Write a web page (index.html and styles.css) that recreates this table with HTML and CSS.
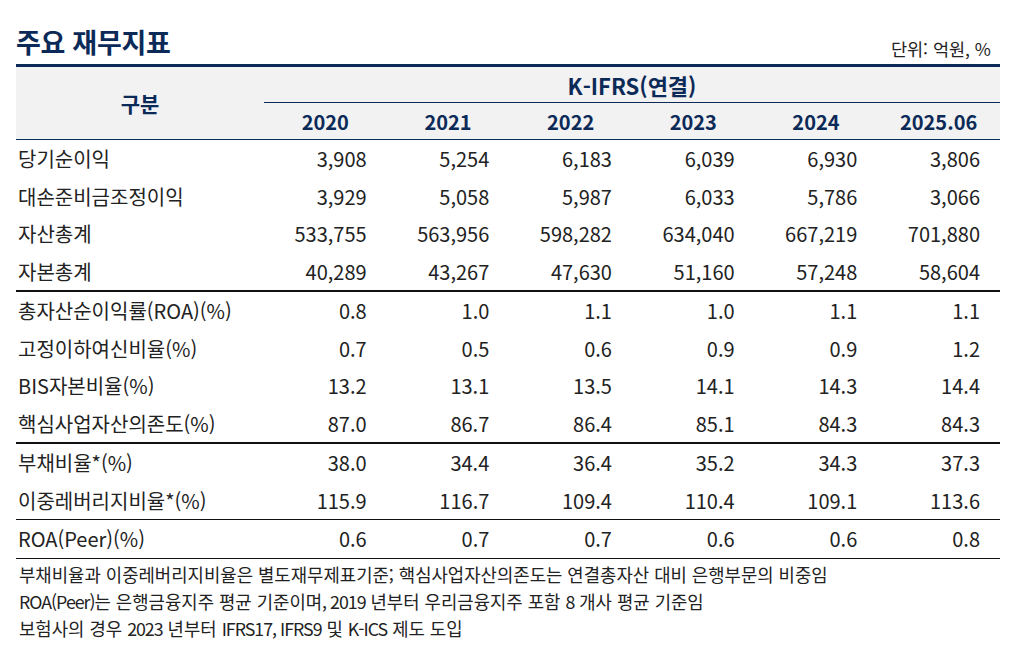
FILE: index.html
```html
<!DOCTYPE html>
<html lang="ko">
<head>
<meta charset="utf-8">
<link rel="stylesheet" href="styles.css">
</head>
<body>
<div class="wrap">
  <div class="titlebar">
    <h1 class="title">주요 재무지표</h1>
    <div class="unit">단위: 억원, %</div>
  </div>
  <table class="fin">
    <colgroup>
      <col class="c-label">
      <col><col><col><col><col><col>
    </colgroup>
    <thead>
      <tr class="h1">
        <th rowspan="2" class="gubun">구분</th>
        <th colspan="6" class="std">K-IFRS(연결)</th>
      </tr>
      <tr class="h2">
        <th>2020</th><th>2021</th><th>2022</th><th>2023</th><th>2024</th><th>2025.06</th>
      </tr>
    </thead>
    <tbody>
      <tr><td>당기순이익</td><td>3,908</td><td>5,254</td><td>6,183</td><td>6,039</td><td>6,930</td><td>3,806</td></tr>
      <tr><td>대손준비금조정이익</td><td>3,929</td><td>5,058</td><td>5,987</td><td>6,033</td><td>5,786</td><td>3,066</td></tr>
      <tr><td>자산총계</td><td>533,755</td><td>563,956</td><td>598,282</td><td>634,040</td><td>667,219</td><td>701,880</td></tr>
      <tr class="sep-thick"><td>자본총계</td><td>40,289</td><td>43,267</td><td>47,630</td><td>51,160</td><td>57,248</td><td>58,604</td></tr>
      <tr><td>총자산순이익률(ROA)(%)</td><td>0.8</td><td>1.0</td><td>1.1</td><td>1.0</td><td>1.1</td><td>1.1</td></tr>
      <tr><td>고정이하여신비율(%)</td><td>0.7</td><td>0.5</td><td>0.6</td><td>0.9</td><td>0.9</td><td>1.2</td></tr>
      <tr><td>BIS자본비율(%)</td><td>13.2</td><td>13.1</td><td>13.5</td><td>14.1</td><td>14.3</td><td>14.4</td></tr>
      <tr class="sep-thick"><td>핵심사업자산의존도(%)</td><td>87.0</td><td>86.7</td><td>86.4</td><td>85.1</td><td>84.3</td><td>84.3</td></tr>
      <tr><td>부채비율*(%)</td><td>38.0</td><td>34.4</td><td>36.4</td><td>35.2</td><td>34.3</td><td>37.3</td></tr>
      <tr class="sep-thin"><td>이중레버리지비율*(%)</td><td>115.9</td><td>116.7</td><td>109.4</td><td>110.4</td><td>109.1</td><td>113.6</td></tr>
      <tr class="sep-thin"><td>ROA(Peer)(%)</td><td>0.6</td><td>0.7</td><td>0.7</td><td>0.6</td><td>0.6</td><td>0.8</td></tr>
    </tbody>
  </table>
  <div class="notes">
    <p>부채비율과 이중레버리지비율은 별도재무제표기준; 핵심사업자산의존도는 연결총자산 대비 은행부문의 비중임</p>
    <p><span class="lat">ROA(Peer)</span>는 은행금융지주 평균 기준이며<span class="lat">, 2019</span> 년부터 우리금융지주 포함 <span class="lat">8</span> 개사 평균 기준임</p>
    <p>보험사의 경우 <span class="lat">2023</span> 년부터 <span class="lat">IFRS17, IFRS9</span> 및 <span class="lat">K-ICS</span> 제도 도입</p>
  </div>
</div>
</body>
</html>
```
FILE: styles.css
```css
html, body {
  margin: 0;
  padding: 0;
  background: #ffffff;
}
body {
  font-family: "Noto Sans CJK KR", "Noto Sans", sans-serif;
  color: #1f1f1f;
}
.wrap {
  width: 984px;
  padding: 0 0 0 16px;
}
.titlebar {
  display: flex;
  justify-content: space-between;
  align-items: flex-end;
  height: 64px;
  box-sizing: border-box;
  padding-bottom: 4px;
}
.title {
  margin: 0 0 2px 0;
  font-size: 27px;
  font-weight: 700;
  color: #0c2a58;
  letter-spacing: -0.3px;
  line-height: 32px;
}
.unit {
  font-size: 17.5px;
  color: #222;
  margin-right: 9px;
  line-height: 22px;
}
.fin {
  width: 984px;
  border-collapse: collapse;
  table-layout: fixed;
  border-top: 3px solid #0c2a58;
}
.c-label {
  width: 248px;
}
.fin thead th {
  background: #f2f2f2;
  color: #0c2a58;
  font-weight: 700;
  padding: 0;
  text-align: center;
}
.fin .h1 th.std {
  height: 35px;
  font-size: 22px;
  border-bottom: 1px solid #0c2a58;
}
.fin .gubun {
  font-size: 21px;
  border-bottom: 1px solid #0c2a58;
}
.fin .h2 th {
  height: 36px;
  font-size: 20px;
  border-bottom: 1px solid #0c2a58;
}
.fin tbody td {
  height: 37.5px;
  padding: 0 20px 0 0;
  font-size: 20px;
  text-align: right;
  color: #222;
}
.fin tbody td:first-child {
  text-align: left;
  padding: 0 0 0 2px;
}
.fin tr.sep-thick td {
  border-bottom: 2px solid #111;
}
.fin tr.sep-thin td {
  border-bottom: 1px solid #111;
}
.notes {
  padding: 2px 0 0 3px;
}
.notes p {
  margin: 0;
  font-size: 17.8px;
  line-height: 27px;
  color: #222;
}
.notes .lat {
  letter-spacing: -1px;
}
```
